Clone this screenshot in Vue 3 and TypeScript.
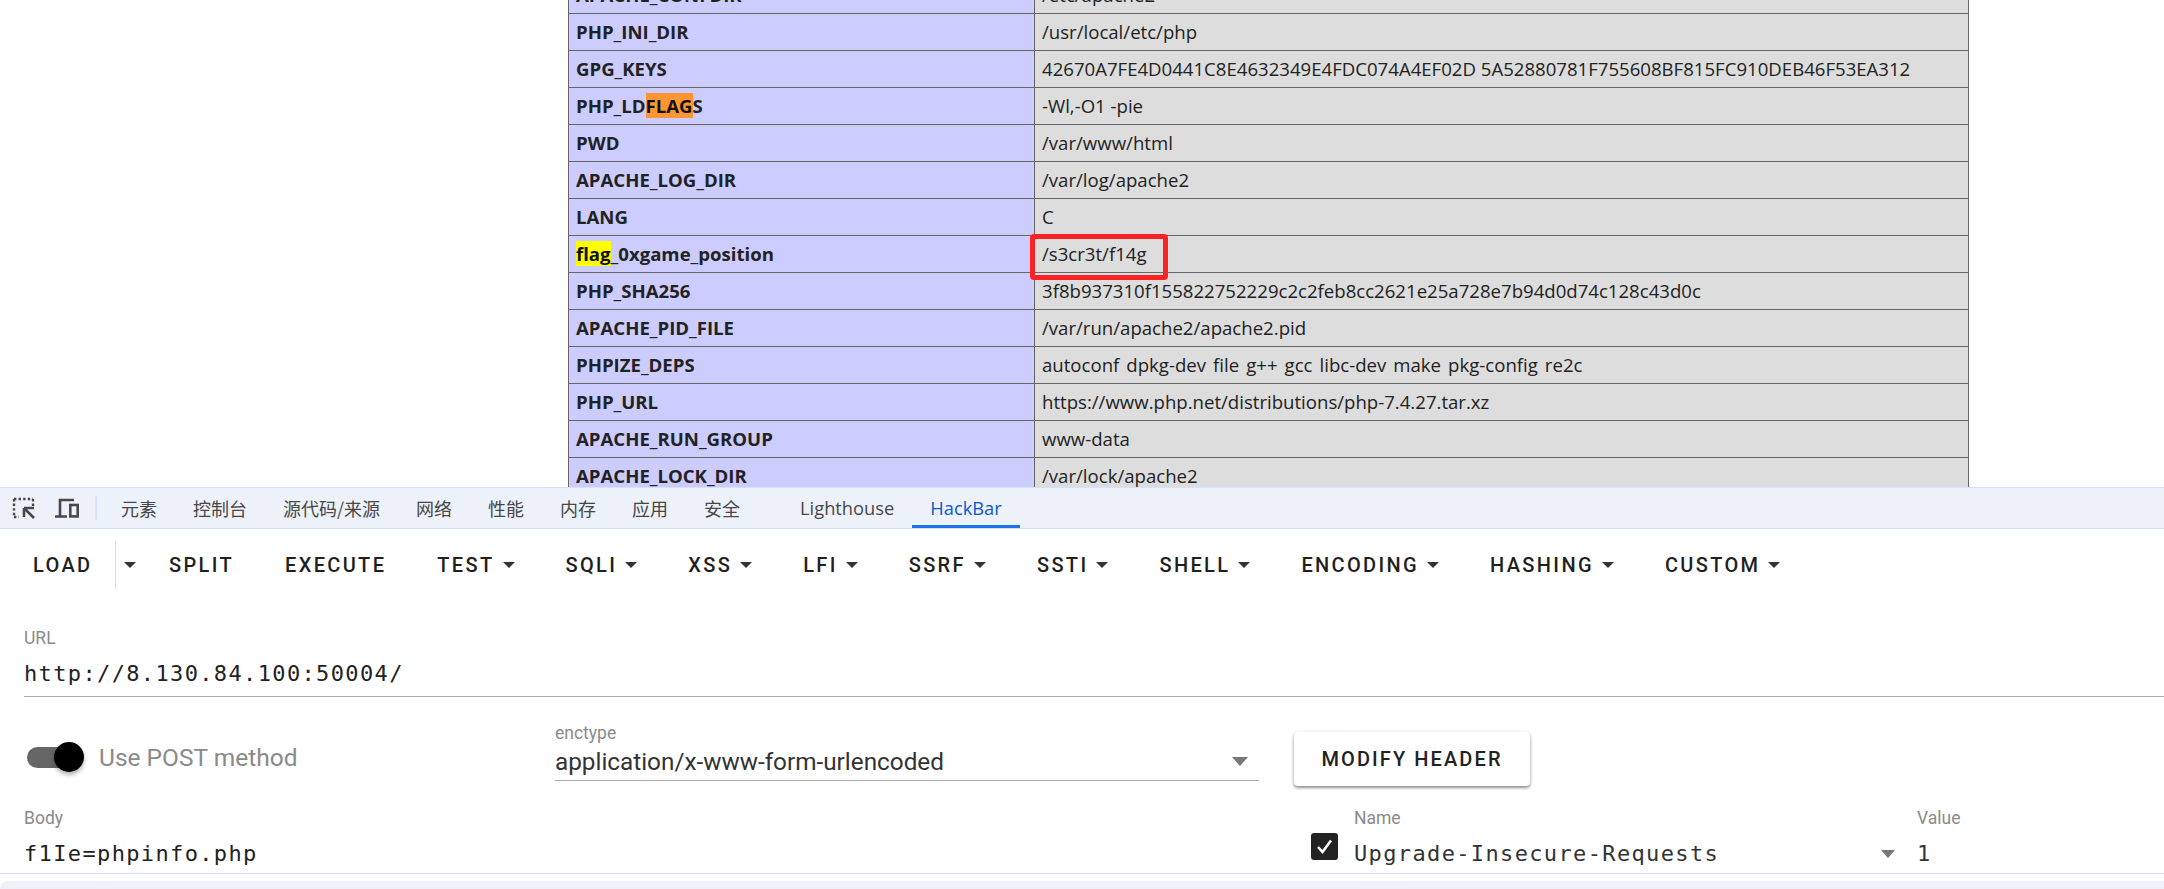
<script setup lang="ts">
const rows: [string, string][] = [
  ['APACHE_CONFDIR', '/etc/apache2'],
  ['PHP_INI_DIR', '/usr/local/etc/php'],
  ['GPG_KEYS', '42670A7FE4D0441C8E4632349E4FDC074A4EF02D 5A52880781F755608BF815FC910DEB46F53EA312'],
  ['PHP_LDFLAGS', '-Wl,-O1 -pie'],
  ['PWD', '/var/www/html'],
  ['APACHE_LOG_DIR', '/var/log/apache2'],
  ['LANG', 'C'],
  ['flag_0xgame_position', '/s3cr3t/f14g'],
  ['PHP_SHA256', '3f8b937310f155822752229c2c2feb8cc2621e25a728e7b94d0d74c128c43d0c'],
  ['APACHE_PID_FILE', '/var/run/apache2/apache2.pid'],
  ['PHPIZE_DEPS', 'autoconf dpkg-dev file g++ gcc libc-dev make pkg-config re2c'],
  ['PHP_URL', 'https://www.php.net/distributions/php-7.4.27.tar.xz'],
  ['APACHE_RUN_GROUP', 'www-data'],
  ['APACHE_LOCK_DIR', '/var/lock/apache2'],
]
const tabs = ['元素', '控制台', '源代码/来源', '网络', '性能', '内存', '应用', '安全']
const menus: [string, boolean][] = [
  ['SPLIT', false], ['EXECUTE', false], ['TEST', true], ['SQLI', true], ['XSS', true], ['LFI', true],
  ['SSRF', true], ['SSTI', true], ['SHELL', true], ['ENCODING', true], ['HASHING', true], ['CUSTOM', true],
]
</script>

<template>
  <div class="root">
    <div class="page">
      <table class="info">
        <tbody>
          <tr v-for="r in rows" :key="r[0]">
            <td class="k">
              <template v-if="r[0] === 'PHP_LDFLAGS'">PHP_LD<span class="orange">FLAG</span>S</template>
              <template v-else-if="r[0] === 'flag_0xgame_position'"><span class="yellow">flag</span>_0xgame_position</template>
              <template v-else>{{ r[0] }}</template>
            </td>
            <td class="v" :class="{ wide: r[0] === 'PHPIZE_DEPS' }">
              {{ r[1] }}
              <span v-if="r[0] === 'flag_0xgame_position'" class="redbox"></span>
            </td>
          </tr>
        </tbody>
      </table>
    </div>

    <div class="tabbar">
      <svg class="ico first" width="24" height="24" viewBox="0 0 24 24" fill="none" stroke="#474747">
        <path d="M2 3h19M2 3v18M2 21h5" stroke-width="2.4" stroke-dasharray="2.4 2.2" />
        <path d="M21 3v8" stroke-width="2.4" stroke-dasharray="2.4 2.2" />
        <path d="M12 12h10M12 12v9M12.5 12.5l9.5 9.5" stroke-width="2.6" />
      </svg>
      <svg class="ico second" width="26" height="24" viewBox="0 0 26 24" fill="none" stroke="#474747" stroke-width="2.6">
        <path d="M6 20V4h14M1 20.5h12" />
        <rect x="16.3" y="9" width="7.4" height="11.4" />
      </svg>
      <span class="sep"></span>
      <span v-for="t in tabs" :key="t" class="tab">{{ t }}</span>
      <span class="tab light">Lighthouse</span>
      <span class="tab active">HackBar</span>
    </div>

    <div class="bar">
      <span class="btn load">LOAD</span>
      <span class="splitcaret"><i class="caret"></i></span>
      <span v-for="m in menus" :key="m[0]" class="btn">{{ m[0] }}<i v-if="m[1]" class="caret after"></i></span>
    </div>

    <div class="form">
      <div class="url">
        <label class="lbl">URL</label>
        <div class="mono val">http://8.130.84.100:50004/</div>
      </div>
      <div class="opts">
        <div class="switch"><span class="track"><span class="thumb"></span></span><span class="swlabel">Use POST method</span></div>
        <div class="enc">
          <label class="lbl small">enctype</label>
          <div class="selval">application/x-www-form-urlencoded<i class="caret grey big"></i></div>
        </div>
        <div class="modify">MODIFY HEADER</div>
      </div>
      <div class="bottom">
        <div class="body">
          <label class="lbl">Body</label>
          <div class="mono val">f1Ie=phpinfo.php</div>
        </div>
        <svg class="check" width="27" height="27" viewBox="0 0 27 27"><rect width="27" height="27" rx="3" fill="#222" /><path d="M7 14l4.5 5L20 7.5" fill="none" stroke="#fff" stroke-width="2.6" /></svg>
        <div class="name">
          <label class="lbl">Name</label>
          <div class="mono val thin">Upgrade-Insecure-Requests<i class="caret grey"></i></div>
        </div>
        <div class="value">
          <label class="lbl">Value</label>
          <div class="mono val thin">1</div>
        </div>
      </div>
    </div>

    <div class="drawer"><div class="drawerin"></div></div>
  </div>
</template>

<style>
html, body { margin: 0; background: #fff; overflow: hidden; }
</style>

<style scoped>
.root { width: 2164px; height: 889px; overflow: hidden; display: flex; flex-direction: column; background: #fff; font-family: Roboto, sans-serif; }
.page { height: 487px; flex: none; overflow: hidden; padding-left: 568px; }
.info { border-collapse: collapse; margin-top: -24px; width: 1401px; table-layout: fixed; font-family: "Open Sans", sans-serif; font-size: 18.6px; color: #222; }
.info td { height: 37px; padding: 0 7px; border: 1px solid #666; box-sizing: border-box; line-height: 24px; white-space: nowrap; }
.k { width: 466px; background: #ccf; font-weight: 700; }
.v { background: #ddd; position: relative; }
.wide { word-spacing: 2.2px; }
.orange { background: #ff9632; color: #111; }
.yellow { background: #ff0; color: #111; }
.redbox { position: absolute; z-index: 2; left: -5px; top: -2px; width: 128px; height: 36px; border: 5px solid #fa2222; border-radius: 4px; }
.tabbar { height: 42px; flex: none; box-sizing: border-box; border-top: 1px solid #d3e3fd; border-bottom: 1px solid #d3e3fd; background: #edf2fa; display: flex; align-items: center; }
.ico { flex: none; }
.first { margin-left: 12px; }
.second { margin-left: 18px; }
.sep { width: 2px; height: 24px; background: #d3e3fd; margin: 0 6px 0 15px; flex: none; }
.tab { font-family: "Noto Sans CJK SC", sans-serif; font-size: 18px; color: #474747; padding: 0 18px; line-height: 40px; flex: none; }
.light { margin-left: 24px; font-family: "Open Sans", "Noto Sans CJK SC", sans-serif; font-size: 18.3px; }
.active { color: #0b57d0; box-shadow: inset 0 -3px 0 #1a73e8; font-family: "Open Sans", sans-serif; font-size: 18.3px; }
.bar { display: flex; align-items: center; height: 71px; flex: none; padding-left: 33px; }
.btn { font-size: 20px; font-weight: 500; letter-spacing: 2.35px; color: #1f1f1f; margin-right: 51px; display: flex; align-items: center; white-space: nowrap; flex: none; }
.load { margin-right: 0; width: 82px; }
.splitcaret { width: 54px; height: 48px; border-left: 1px solid #ddd; display: flex; align-items: center; flex: none; box-sizing: border-box; padding-left: 8px; }
.caret { display: inline-block; width: 0; height: 0; flex: none; border-left: 6px solid transparent; border-right: 6px solid transparent; border-top: 6px solid #333; }
.after { margin-left: 8px; }
.form { flex: 1; min-height: 0; padding-left: 24px; display: flex; flex-direction: column; }
.lbl { display: block; font-size: 17.5px; color: #8a8a8a; line-height: 20px; }
.url { height: 97px; box-sizing: border-box; border-bottom: 1px solid #a8a8a8; padding-top: 28px; flex: none; }
.mono { font-family: "DejaVu Sans Mono", monospace; font-size: 22px; letter-spacing: 1.36px; color: #222; }
.val { line-height: 30px; margin-top: 11px; }
.opts { display: flex; height: 112px; flex: none; }
.switch { display: flex; align-items: center; width: 531px; flex: none; height: 120px; }
.track { width: 46px; height: 21px; border-radius: 11px; background: #666; margin-left: 3px; position: relative; display: block; }
.thumb { position: absolute; left: 27px; top: -5px; width: 30px; height: 30px; border-radius: 50%; background: #000; box-shadow: 0 3px 4px rgba(0,0,0,.3); }
.swlabel { margin-left: 26px; font-size: 24.5px; color: #8a8a8a; }
.enc { width: 704px; flex: none; height: 84px; box-sizing: border-box; padding-top: 27px; }
.small { line-height: 18px; }
.selval { display: flex; align-items: center; justify-content: space-between; font-size: 24.3px; color: #333; height: 39px; border-bottom: 1px solid #aaa; box-sizing: border-box; padding-right: 11px; }
.caret.grey { border-top-color: #777; border-top-width: 8px; border-left-width: 7px; border-right-width: 7px; }
.big { border-left-width: 8px !important; border-right-width: 8px !important; border-top-width: 9px !important; }
.modify { margin: 35px 0 0 35px; width: 236px; height: 54px; display: flex; align-items: center; justify-content: center; font-size: 20px; font-weight: 500; letter-spacing: 2.1px; color: #222; border-radius: 4px; box-shadow: 0 2px 3px rgba(0,0,0,.4), 0 0 4px rgba(0,0,0,.1); }
.bottom { display: flex; flex: 1; min-height: 0; margin-top: -1px; }
.body { width: 1287px; flex: none; }
.check { margin-top: 25px; flex: none; }
.name { width: 563px; flex: none; margin-left: 16px; }
.thin { display: flex; align-items: center; justify-content: space-between; padding-right: 22px; color: #333; }
.value { flex: 1; }
.drawer { flex: none; height: 16px; border-top: 1px solid #d3e3fd; box-sizing: border-box; padding-top: 7px; }
.drawerin { height: 8px; background: #edf2fa; border-radius: 12px 0 0 0; }
</style>
